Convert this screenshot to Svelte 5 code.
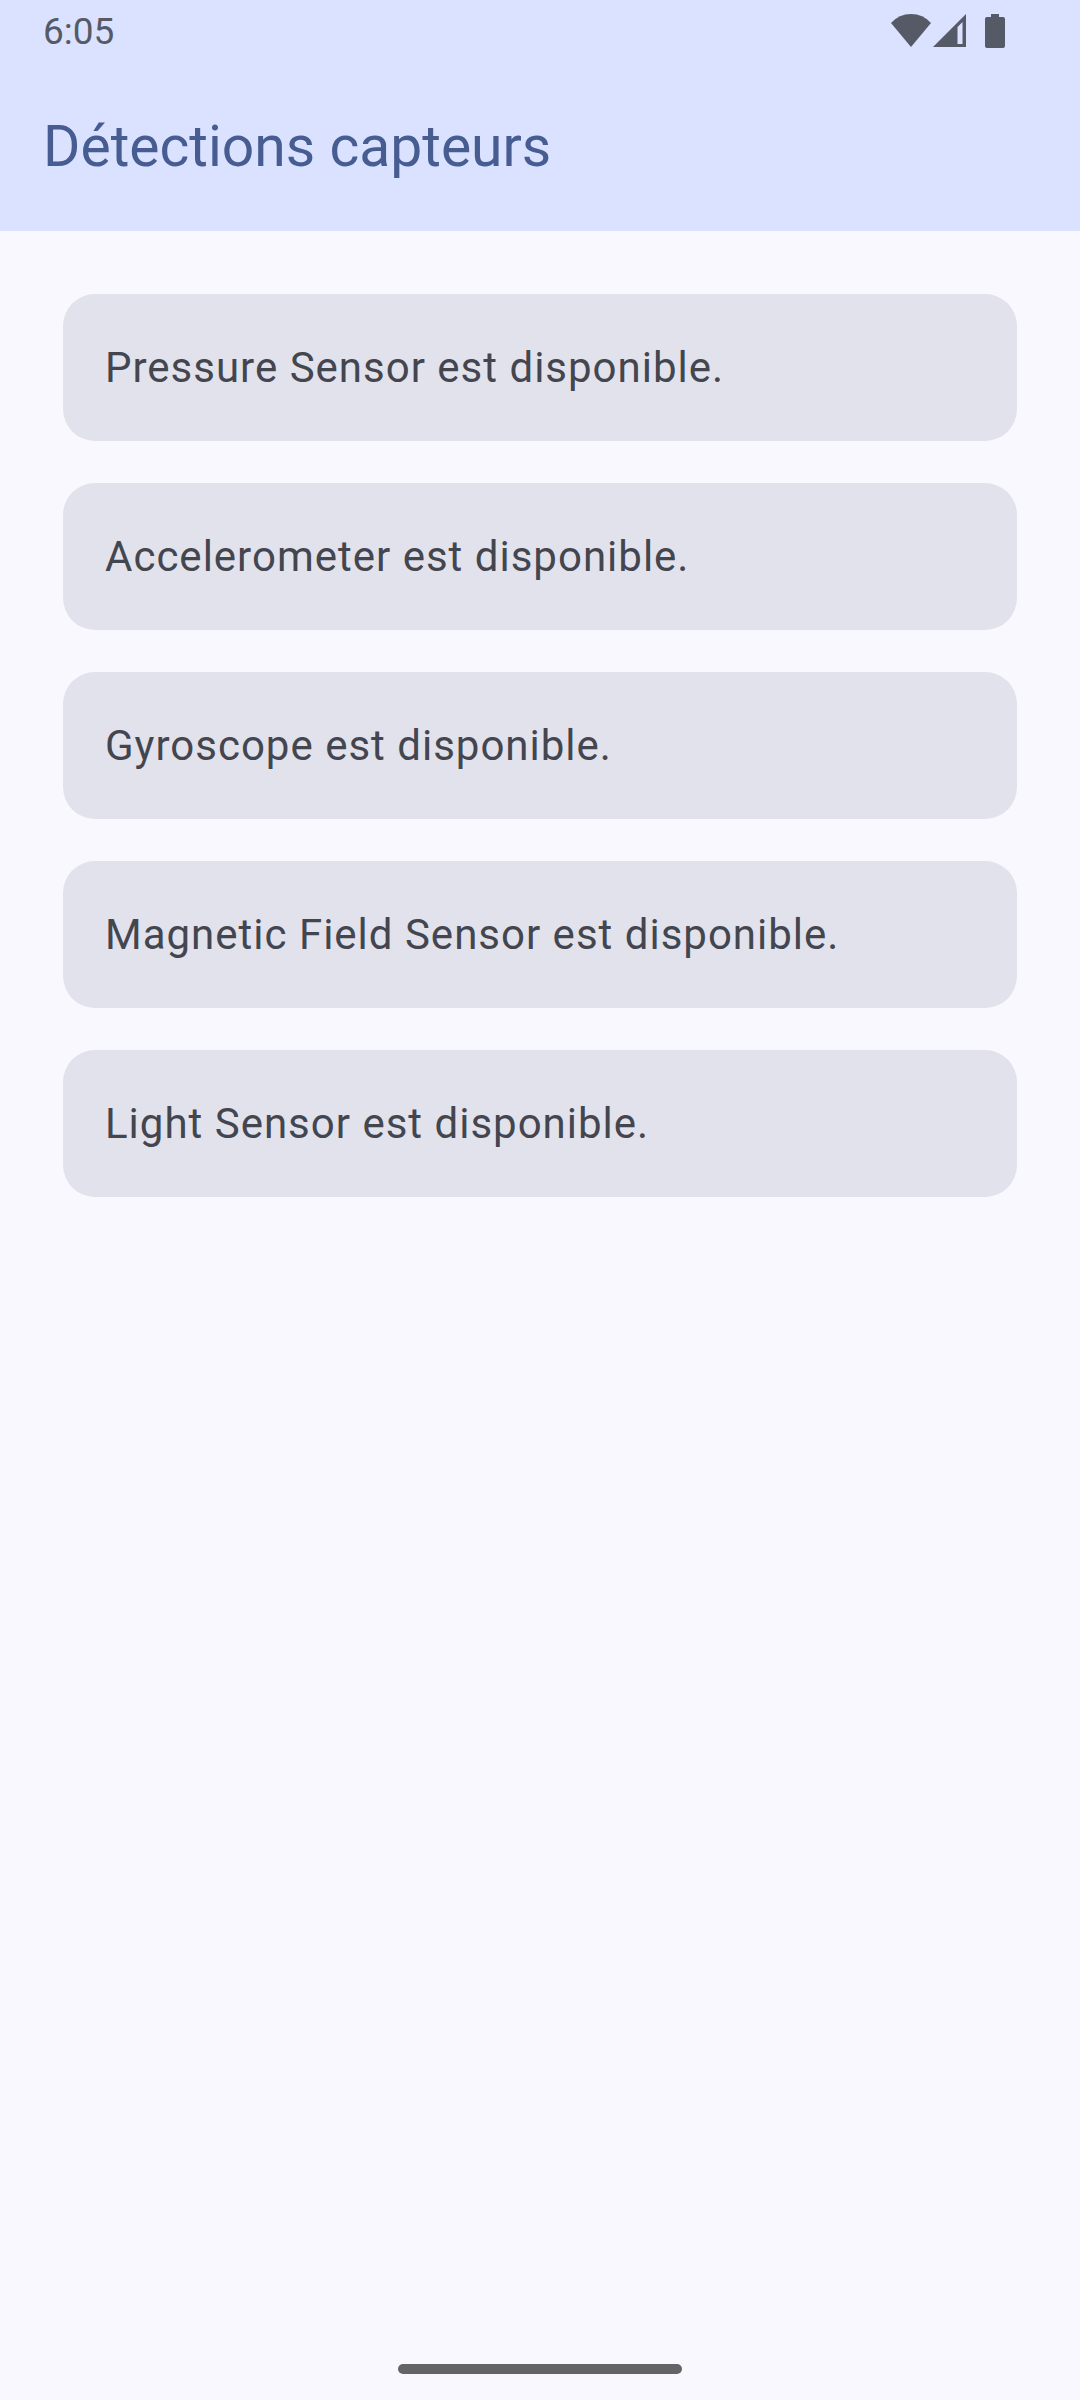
<script>
  const sensors = ['Pressure Sensor', 'Accelerometer', 'Gyroscope', 'Magnetic Field Sensor', 'Light Sensor'];
</script>

<div class="screen">
  <header>
    <div class="status">
      <time>6:05</time>
      <div class="icons">
        <svg class="wifi" viewBox="0 0 40 34" aria-hidden="true"><path d="M20 33L0 9Q8 0 20 0T40 9Z" /></svg>
        <svg class="signal" viewBox="0 0 34 34" aria-hidden="true"><path fill-rule="evenodd" d="M33 0V33H0ZM24.500 13V30H29.500V8Z" /></svg>
        <svg class="battery" viewBox="0 0 20 34" aria-hidden="true"><path d="M6 0H14V3H18Q20 3 20 5V32Q20 34 18 34H2Q0 34 0 32V5Q0 3 2 3H6Z" /></svg>
      </div>
    </div>
    <h1>Détections capteurs</h1>
  </header>
  <main>
    <ul>
      {#each sensors as sensor}
        <li>{sensor} est disponible.</li>
      {/each}
    </ul>
  </main>
  <footer><span class="handle"></span></footer>
</div>

<style>
  :global(body) { background: #faf8ff; }
  .screen { min-height: 100vh; display: flex; flex-direction: column; font-family: Roboto, sans-serif; background: #faf8ff; }
  header { background: #dae2ff; color: #475d92; }
  .status { display: flex; justify-content: space-between; align-items: center; height: 62px; padding: 0 75px 0 43px; color: #565a66; font-size: 37px; }
  .icons { display: flex; align-items: center; }
  svg { height: 34px; fill: currentColor; }
  .wifi { width: 40px; margin-right: 2px; }
  .signal { width: 34px; margin-right: 18px; }
  .battery { width: 20px; }
  h1 { margin: 0; padding: 0 43px; font-size: 57px; font-weight: 400; line-height: 169px; }
  main { flex: 1; padding: 63px; }
  ul { display: flex; flex-direction: column; gap: 42px; margin: 0; padding: 0; list-style: none; }
  li { padding: 42px; border-radius: 32px; background: #e2e2ec; color: #44464f; font-size: 42px; line-height: 63px; letter-spacing: 1px; }
  footer { display: flex; justify-content: center; padding-bottom: 26px; }
  .handle { width: 284px; height: 10px; border-radius: 5px; background: #646466; }
</style>
